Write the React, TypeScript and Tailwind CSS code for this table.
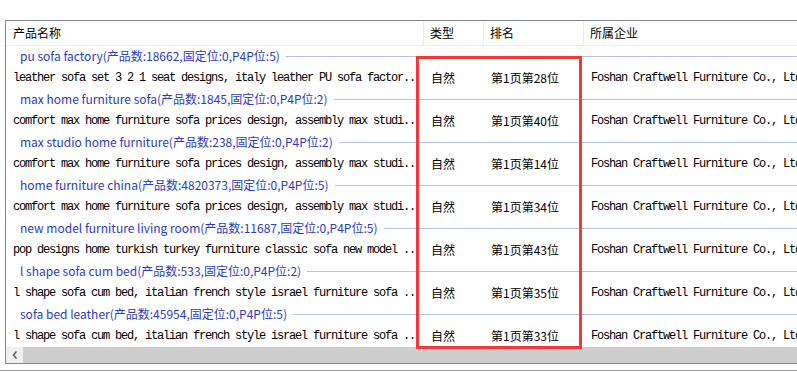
const groups = [
  {
    title: "pu sofa factory(产品数:18662,固定位:0,P4P位:5)",
    name: "leather sofa set 3 2 1 seat designs, italy leather PU sofa factor..",
    rank: "第1页第28位",
  },
  {
    title: "max home furniture sofa(产品数:1845,固定位:0,P4P位:2)",
    name: "comfort max home furniture sofa prices design, assembly max studi..",
    rank: "第1页第40位",
  },
  {
    title: "max studio home furniture(产品数:238,固定位:0,P4P位:2)",
    name: "comfort max home furniture sofa prices design, assembly max studi..",
    rank: "第1页第14位",
  },
  {
    title: "home furniture china(产品数:4820373,固定位:0,P4P位:5)",
    name: "comfort max home furniture sofa prices design, assembly max studi..",
    rank: "第1页第34位",
  },
  {
    title: "new model furniture living room(产品数:11687,固定位:0,P4P位:5)",
    name: "pop designs home turkish turkey furniture classic sofa new model ..",
    rank: "第1页第43位",
  },
  {
    title: "l shape sofa cum bed(产品数:533,固定位:0,P4P位:2)",
    name: "l shape sofa cum bed, italian french style israel furniture sofa ..",
    rank: "第1页第35位",
  },
  {
    title: "sofa bed leather(产品数:45954,固定位:0,P4P位:5)",
    name: "l shape sofa cum bed, italian french style israel furniture sofa ..",
    rank: "第1页第33位",
  },
];

const ui = "font-['Microsoft_YaHei','Noto_Sans_CJK_SC',sans-serif]";
const mono =
  "font-['Liberation_Mono','Noto_Sans_CJK_SC',monospace] tracking-[-1.2px]";

const App = () => {
  return (
    <div className="w-[797px] h-[372px] overflow-hidden bg-white pt-[20px]">
      <div className="relative ml-[5px] w-[830px] border border-[#828790] bg-white">
        {/* column header */}
        <div
          className={`grid grid-cols-[418px_60px_100px_1fr] h-[25px] border-b border-[#e5edf8] text-[12px] text-black ${ui}`}
        >
          <div className="flex items-center pl-[7px] border-r border-[#e5edf8]">
            产品名称
          </div>
          <div className="flex items-center pl-[6px] border-r border-[#e5edf8]">
            类型
          </div>
          <div className="flex items-center pl-[6px] border-r border-[#e5edf8]">
            排名
          </div>
          <div className="flex items-center pl-[6px]">所属企业</div>
        </div>

        {groups.map((g, i) => (
          <div key={i}>
            <div className="flex items-center h-[20px] pl-[14px]">
              <span className={`text-[12px] text-[#2a3cc4] whitespace-nowrap ${ui}`}>
                {g.title}
              </span>
              <div className="flex-1 h-px bg-[#b4c2e4] ml-[6px]" />
            </div>
            <div className="grid grid-cols-[418px_60px_100px_1fr] h-[23px] items-center text-[12px] text-black">
              <div className={`pl-[7px] whitespace-nowrap overflow-hidden ${mono}`}>
                {g.name}
              </div>
              <div className={`pl-[7px] ${ui}`}>自然</div>
              <div className={`pl-[7px] ${ui}`}>{g.rank}</div>
              <div className={`pl-[7px] whitespace-nowrap ${mono}`}>
                Foshan Craftwell Furniture Co., Ltd
              </div>
            </div>
          </div>
        ))}

        {/* horizontal scrollbar */}
        <div className="flex h-[16px]">
          <div className="w-[17px] flex items-center justify-center bg-[#f0f0f0]">
            <svg width="6" height="8" viewBox="0 0 6 8">
              <path d="M4.5 0.5 L1.5 4 L4.5 7.5" fill="none" stroke="#606060" strokeWidth="1.6" />
            </svg>
          </div>
          <div className="flex-1 bg-[#cdcdcd]" />
        </div>

        {/* highlight box */}
        <div className="absolute left-[410px] top-[35px] w-[166px] h-[293px] border-[3px] border-[#f03a3a]" />
      </div>
      <div className="mt-[6px] h-px bg-[#a0a0a0]" />
    </div>
  );
};

export default App;
